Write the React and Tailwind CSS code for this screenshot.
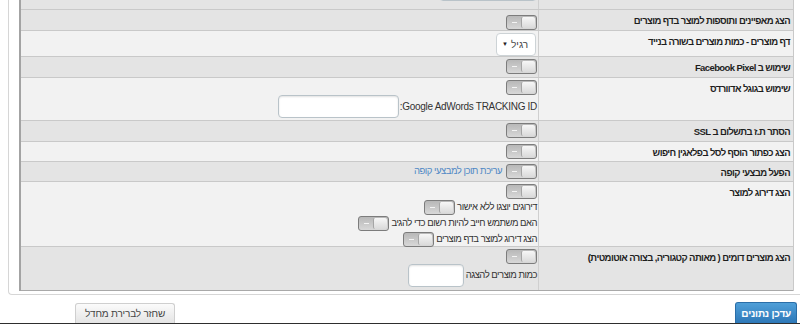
import React from 'react';

const font = { fontFamily: '"Liberation Sans", Arial, "DejaVu Sans Condensed", "DejaVu Sans", sans-serif' };

const Toggle = () => (
  <span dir="ltr" className="inline-flex w-[31px] h-[15px] shrink-0 rounded-[3px] border border-[#7c7c7c] bg-linear-to-b from-[#b8b8b8] to-[#d8d8d8] overflow-hidden">
    <span className="w-[14px] flex items-center justify-center">
      <span className="w-[5px] h-px bg-[#f4f4f4]" />
    </span>
    <span className="flex-1 my-px mr-px rounded-[2px] border-l border-[#a5a5a5] bg-linear-to-b from-[#f7f7f7] to-[#dadada]" />
  </span>
);

const Row = ({ label, dark, h, children, last }) => (
  <div className={`grid grid-cols-[255px_1fr] border-b ${last ? 'border-[#a9a9a9]' : 'border-[#c9c9c9]'} ${dark ? 'bg-[#e4e4e4]' : 'bg-[#f2f2f2]'} ${h}`}>
    <div className="border-l border-[#cfcfcf] pr-[3px] pt-[4px] text-[9.5px] tracking-[-0.6px] leading-[13px] font-bold text-[#1e1e1e] whitespace-nowrap overflow-hidden">{label}</div>
    <div className="pr-[1px] pt-[2px] flex flex-col items-start text-[9.5px] tracking-[-0.5px] text-[#333]">{children}</div>
  </div>
);

const Input = ({ w }) => (
  <span className={`block h-[23px] ${w} rounded-[4px] border border-[#b9c3c9] bg-white shadow-[inset_0_1px_2px_rgba(0,0,0,0.12)]`} />
);

export default function App() {
  return (
    <div dir="rtl" style={font} className="w-[800px] h-[324px] bg-white overflow-hidden flex flex-col">
      <div className="ml-[8px] border-l border-b border-[#d6d6d6] rounded-bl-[4px] pl-[10px] pr-[6px] pb-[3px] bg-white">
        <div className="border-l-2 border-r border-l-[#a3a3a3] border-r-[#c9c9c9]">
          <Row dark h="h-[10px]" label="">
            <div className="-mt-[24px]"><Input w="w-[98px]" /></div>
          </Row>
          <Row dark h="h-[21px]" label="הצג מאפיינים ותוספות למוצר בדף מוצרים">
            <div className="pt-px"><Toggle /></div>
          </Row>
          <Row h="h-[26px]" label="דף מוצרים - כמות מוצרים בשורה בנייד">
            <div className="mr-px flex items-center justify-between w-[40px] h-[23px] rounded-[4px] border border-[#cdd3d6] bg-white pr-[7px] pl-[5px] text-[10px] tracking-normal text-[#444]">
              <span>רגיל</span>
              <span className="text-[6px] text-[#222]">▼</span>
            </div>
          </Row>
          <Row dark h="h-[21px]" label="שימוש ב Facebook Pixel">
            <Toggle />
          </Row>
          <Row h="h-[43px]" label="שימוש בגוגל אדוורדס">
            <Toggle />
            <div className="flex items-center gap-[1px]">
              <span className="text-[10px] tracking-[-0.3px]">Google AdWords TRACKING ID:</span>
              <Input w="w-[121px]" />
            </div>
          </Row>
          <Row dark h="h-[21px]" label="הסתר ת.ז בתשלום ב SSL">
            <Toggle />
          </Row>
          <Row h="h-[20px]" label="הצג כפתור הוסף לסל בפלאגין חיפוש">
            <Toggle />
          </Row>
          <Row dark h="h-[20px]" label="הפעל מבצעי קופה">
            <div className="flex items-center gap-[4px]">
              <Toggle />
              <span className="text-[#4f88c4]">עריכת תוכן למבצעי קופה</span>
            </div>
          </Row>
          <Row h="h-[65px]" label="הצג דירוג למוצר">
            <Toggle />
            <div className="h-[16px] flex items-center gap-[2px]">
              <span>דירוגים יוצגו ללא אישור</span>
              <Toggle />
            </div>
            <div className="h-[16px] flex items-center gap-[2px]">
              <span>האם משתמש חייב להיות רשום כדי להגיב</span>
              <Toggle />
            </div>
            <div className="h-[16px] flex items-center gap-[2px]">
              <span>הצג דירוג למוצר בדף מוצרים</span>
              <Toggle />
            </div>
          </Row>
          <Row dark last h="h-[44px]" label="הצג מוצרים דומים ( מאותה קטגוריה, בצורה אוטומטית)">
            <Toggle />
            <div className="flex items-center gap-[2px]">
              <span>כמות מוצרים להצגה</span>
              <Input w="w-[56px]" />
            </div>
          </Row>
        </div>
      </div>

      <div className="mt-[7px] flex justify-between items-end pr-[3px] pl-[75px] flex-1">
        <button className="h-[21px] px-[5px] rounded-t-[3px] bg-linear-to-b from-[#4f9fd8] to-[#2d78b8] text-white text-[10px] tracking-[-0.2px] font-bold border border-[#2a6ea8] border-b-0 whitespace-nowrap">
          עדכן נתונים
        </button>
        <button className="h-[20px] px-[9px] rounded-t-[3px] bg-linear-to-b from-[#fbfbfb] to-[#e4e4e4] text-[#444] text-[10px] tracking-[-0.2px] border border-[#cfcfcf] border-b-0 whitespace-nowrap">
          שחזר לברירת מחדל
        </button>
      </div>
      <div className="h-[2px] bg-[#2e2e2e]" />
    </div>
  );
}
